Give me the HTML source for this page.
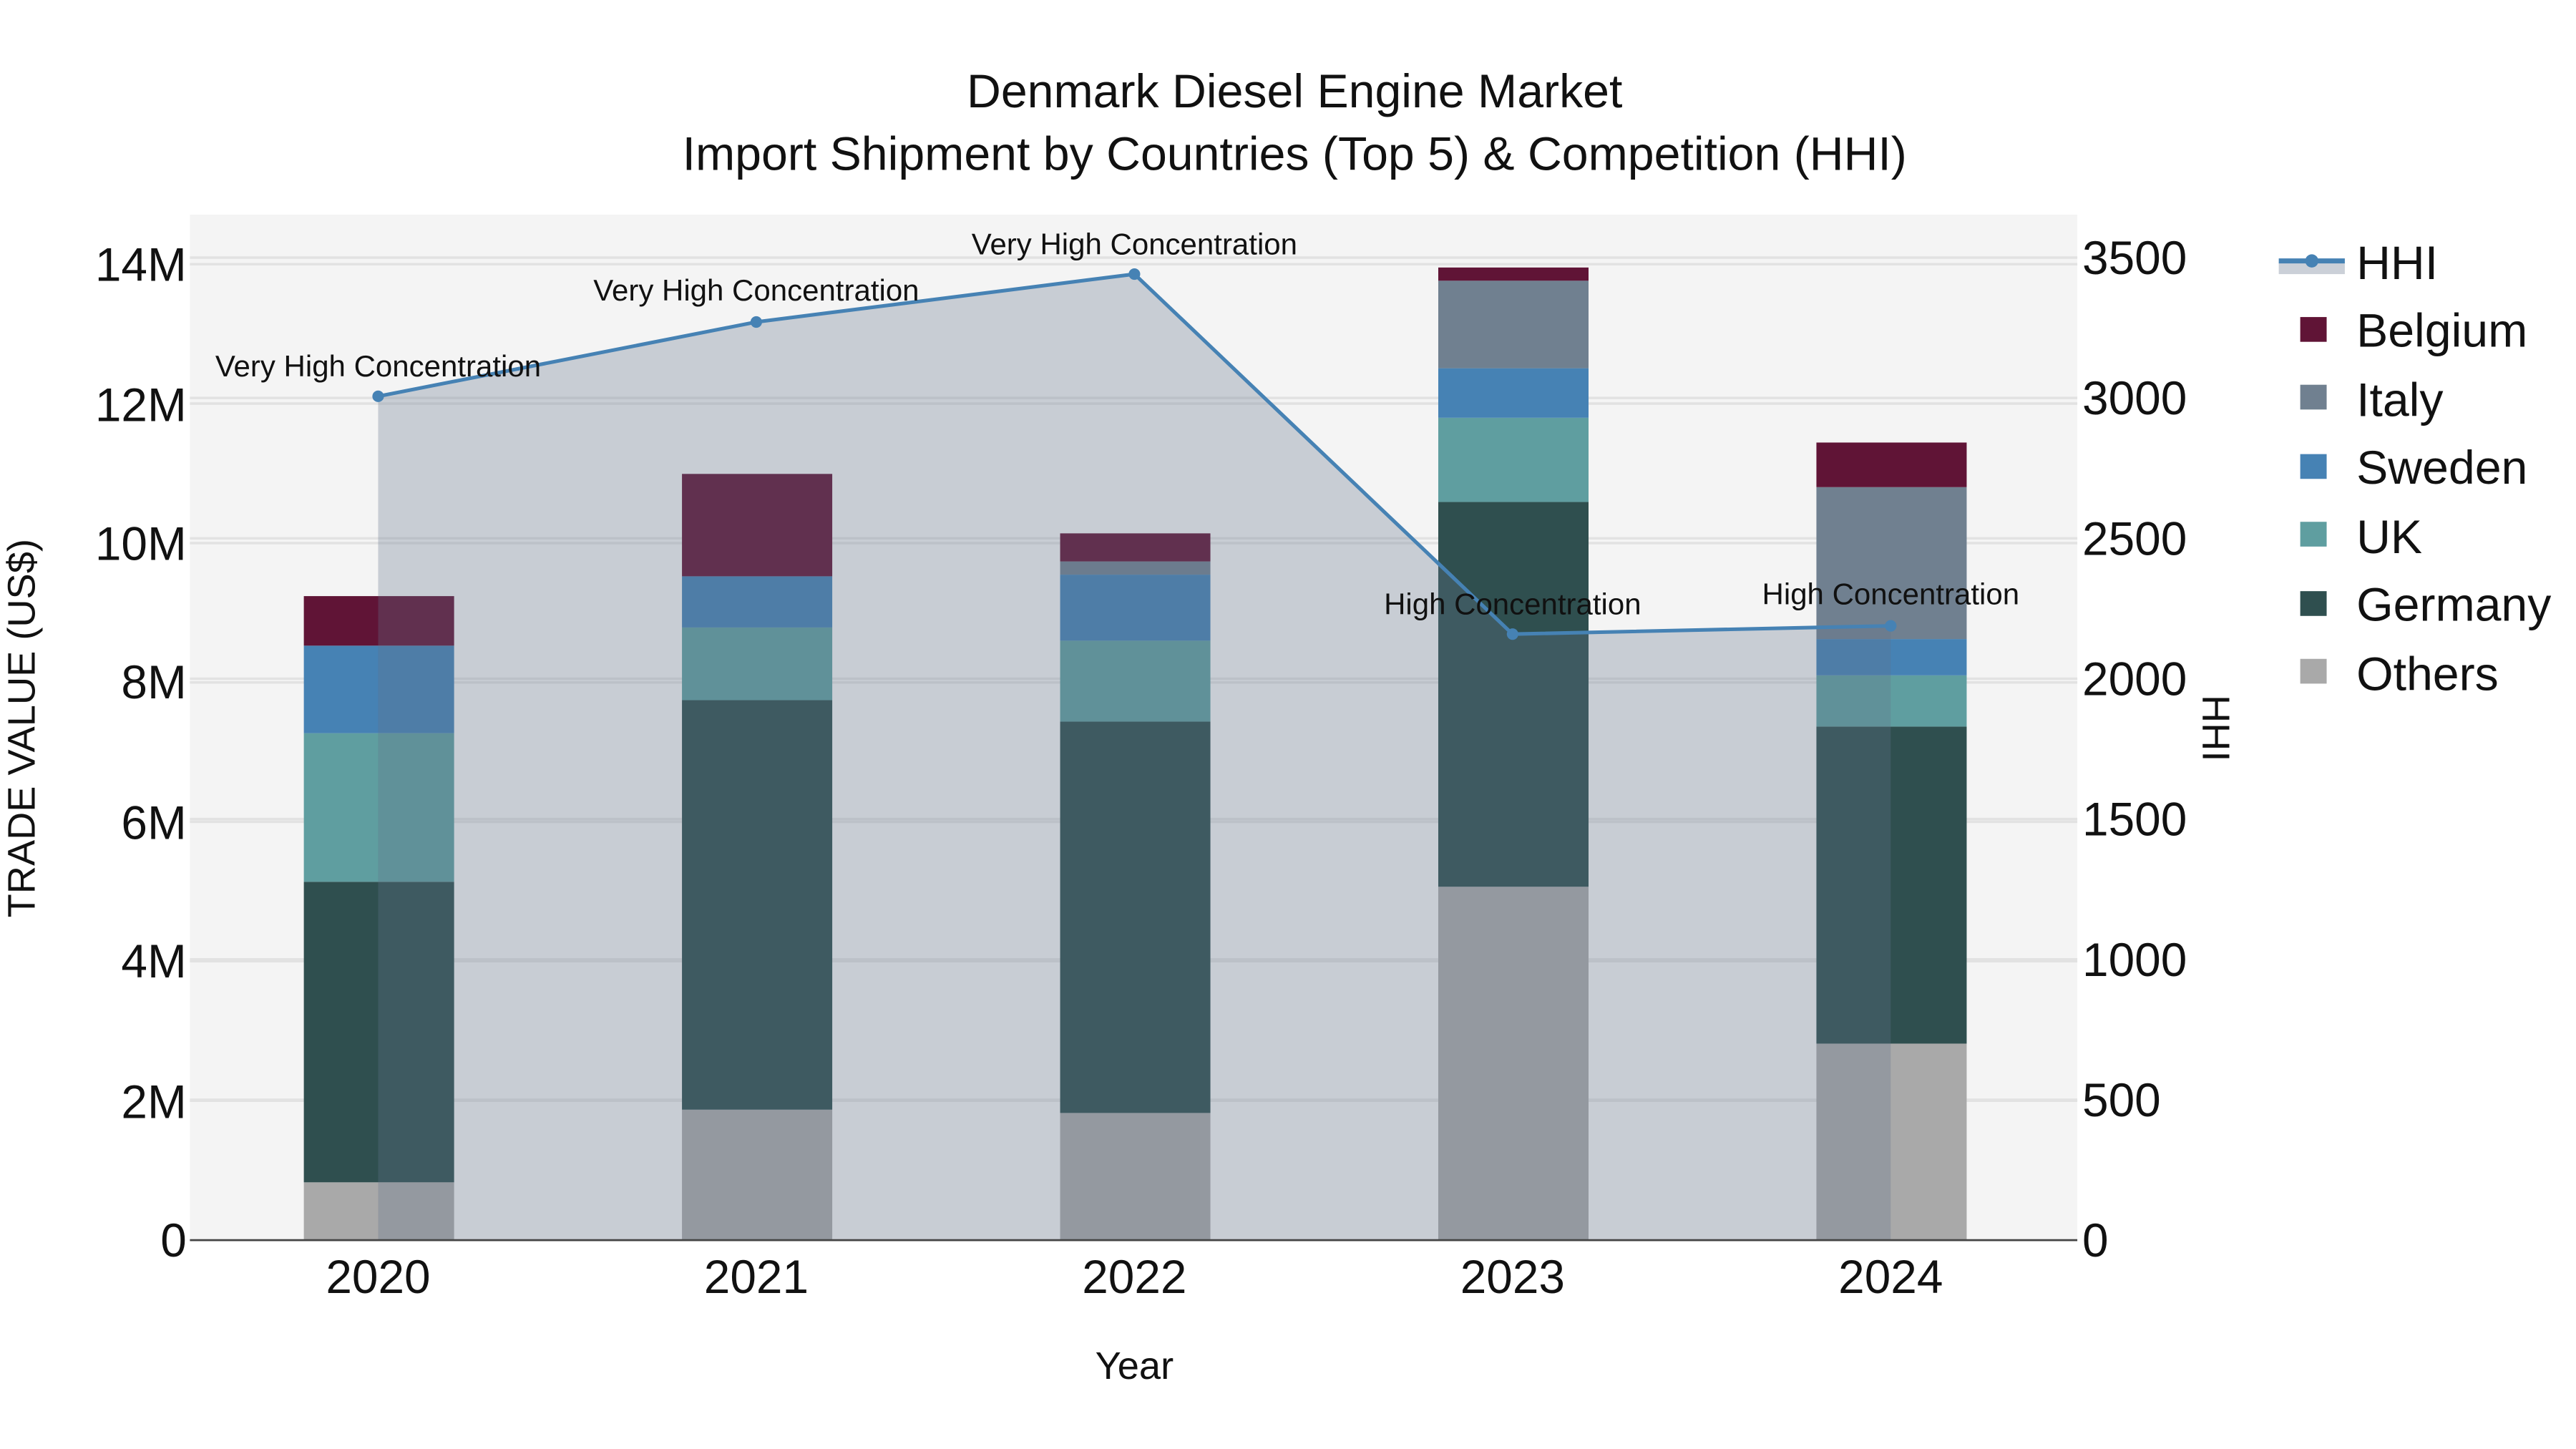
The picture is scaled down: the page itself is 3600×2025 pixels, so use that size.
<!DOCTYPE html>
<html><head><meta charset="utf-8"><style>html,body{margin:0;padding:0;background:#fff}svg{display:block}text{font-family:"Liberation Sans",Arial,sans-serif;fill:#111}</style></head>
<body>
<svg width="3600" height="2025" viewBox="0 0 1560 877.5" xmlns="http://www.w3.org/2000/svg">
<rect x="0" y="0" width="1560" height="877.5" fill="#fff"/>
<rect x="115" y="130" width="1143" height="621" fill="#f4f4f4"/>
<g stroke="#e2e2e2" stroke-width="1.5">
<line x1="115" x2="1258" y1="666.6" y2="666.6"/><line x1="115" x2="1258" y1="582.1" y2="582.1"/><line x1="115" x2="1258" y1="497.7" y2="497.7"/><line x1="115" x2="1258" y1="413.3" y2="413.3"/><line x1="115" x2="1258" y1="328.9" y2="328.9"/><line x1="115" x2="1258" y1="244.4" y2="244.4"/><line x1="115" x2="1258" y1="160" y2="160"/>
<line x1="115" x2="1258" y1="666" y2="666"/><line x1="115" x2="1258" y1="581" y2="581"/><line x1="115" x2="1258" y1="496" y2="496"/><line x1="115" x2="1258" y1="411" y2="411"/><line x1="115" x2="1258" y1="326" y2="326"/><line x1="115" x2="1258" y1="241" y2="241"/><line x1="115" x2="1258" y1="156" y2="156"/>
</g>
<g>
<rect x="184" y="716" width="91" height="35" fill="#a9a9a9"/>
<rect x="184" y="534" width="91" height="182" fill="#2f4f4f"/>
<rect x="184" y="444" width="91" height="90" fill="#5f9ea0"/>
<rect x="184" y="391" width="91" height="53" fill="#4682b4"/>
<rect x="184" y="361" width="91" height="30" fill="#601436"/>

<rect x="413" y="672" width="91" height="79" fill="#a9a9a9"/>
<rect x="413" y="424" width="91" height="248" fill="#2f4f4f"/>
<rect x="413" y="380" width="91" height="44" fill="#5f9ea0"/>
<rect x="413" y="349" width="91" height="31" fill="#4682b4"/>
<rect x="413" y="287" width="91" height="62" fill="#601436"/>

<rect x="642" y="674" width="91" height="77" fill="#a9a9a9"/>
<rect x="642" y="437" width="91" height="237" fill="#2f4f4f"/>
<rect x="642" y="388" width="91" height="49" fill="#5f9ea0"/>
<rect x="642" y="348" width="91" height="40" fill="#4682b4"/>
<rect x="642" y="340" width="91" height="8" fill="#708090"/>
<rect x="642" y="323" width="91" height="17" fill="#601436"/>

<rect x="871" y="537" width="91" height="214" fill="#a9a9a9"/>
<rect x="871" y="304" width="91" height="233" fill="#2f4f4f"/>
<rect x="871" y="253" width="91" height="51" fill="#5f9ea0"/>
<rect x="871" y="223" width="91" height="30" fill="#4682b4"/>
<rect x="871" y="170" width="91" height="53" fill="#708090"/>
<rect x="871" y="162" width="91" height="8" fill="#601436"/>

<rect x="1100" y="632" width="91" height="119" fill="#a9a9a9"/>
<rect x="1100" y="440" width="91" height="192" fill="#2f4f4f"/>
<rect x="1100" y="409" width="91" height="31" fill="#5f9ea0"/>
<rect x="1100" y="387" width="91" height="22" fill="#4682b4"/>
<rect x="1100" y="295" width="91" height="92" fill="#708090"/>
<rect x="1100" y="268" width="91" height="27" fill="#601436"/>
</g>
<polygon points="229,240 458,195 687,166 916,384 1145,379 1145,751 229,751" fill="rgba(100,115,140,0.3)"/>
<polyline points="229,240 458,195 687,166 916,384 1145,379" fill="none" stroke="#4682b4" stroke-width="2.2"/>
<g fill="#4682b4"><circle cx="229" cy="240" r="3.5"/><circle cx="458" cy="195" r="3.5"/><circle cx="687" cy="166" r="3.5"/><circle cx="916" cy="384" r="3.5"/><circle cx="1145" cy="379" r="3.5"/></g>
<line x1="115" x2="1258" y1="751" y2="751" stroke="#444" stroke-width="1.2"/>
<g font-size="18.2" text-anchor="middle">
<text x="229" y="228">Very High Concentration</text>
<text x="458" y="182">Very High Concentration</text>
<text x="687" y="154">Very High Concentration</text>
<text x="916" y="372">High Concentration</text>
<text x="1145" y="366">High Concentration</text>
</g>
<g font-size="28.7" text-anchor="middle">
<text x="784" y="65">Denmark Diesel Engine Market</text>
<text x="784" y="103">Import Shipment by Countries (Top 5) &amp; Competition (HHI)</text>
</g>
<g font-size="28.5" text-anchor="end">
<text x="113" y="761">0</text><text x="113" y="677">2M</text><text x="113" y="592">4M</text><text x="113" y="508">6M</text><text x="113" y="423">8M</text><text x="113" y="339">10M</text><text x="113" y="255">12M</text><text x="113" y="170">14M</text>
</g>
<g font-size="28.5" text-anchor="start">
<text x="1261" y="761">0</text><text x="1261" y="676">500</text><text x="1261" y="591">1000</text><text x="1261" y="506">1500</text><text x="1261" y="421">2000</text><text x="1261" y="336">2500</text><text x="1261" y="251">3000</text><text x="1261" y="166">3500</text>
</g>
<g font-size="28.5" text-anchor="middle">
<text x="229" y="783">2020</text><text x="458" y="783">2021</text><text x="687" y="783">2022</text><text x="916" y="783">2023</text><text x="1145" y="783">2024</text>
</g>
<text x="687" y="835" font-size="23.5" text-anchor="middle">Year</text>
<text transform="translate(21,441) rotate(-90)" font-size="23.5" text-anchor="middle">TRADE VALUE (US$)</text>
<text transform="translate(1334,441) rotate(90)" font-size="23.5" text-anchor="middle">HHI</text>
<rect x="1380" y="159" width="40" height="7" fill="#cbd0d8"/>
<line x1="1380" x2="1420" y1="158" y2="158" stroke="#4682b4" stroke-width="3"/>
<circle cx="1400" cy="158" r="4" fill="#4682b4"/>
<g font-size="28.7">
<text x="1427" y="169">HHI</text>
<text x="1427" y="210">Belgium</text>
<text x="1427" y="252">Italy</text>
<text x="1427" y="293">Sweden</text>
<text x="1427" y="335">UK</text>
<text x="1427" y="376">Germany</text>
<text x="1427" y="418">Others</text>
</g>
<rect x="1393" y="192" width="16" height="15" fill="#601436"/>
<rect x="1393" y="233" width="16" height="15" fill="#708090"/>
<rect x="1393" y="275" width="16" height="15" fill="#4682b4"/>
<rect x="1393" y="316" width="16" height="15" fill="#5f9ea0"/>
<rect x="1393" y="358" width="16" height="15" fill="#2f4f4f"/>
<rect x="1393" y="399" width="16" height="15" fill="#a9a9a9"/>
</svg>
</body></html>
